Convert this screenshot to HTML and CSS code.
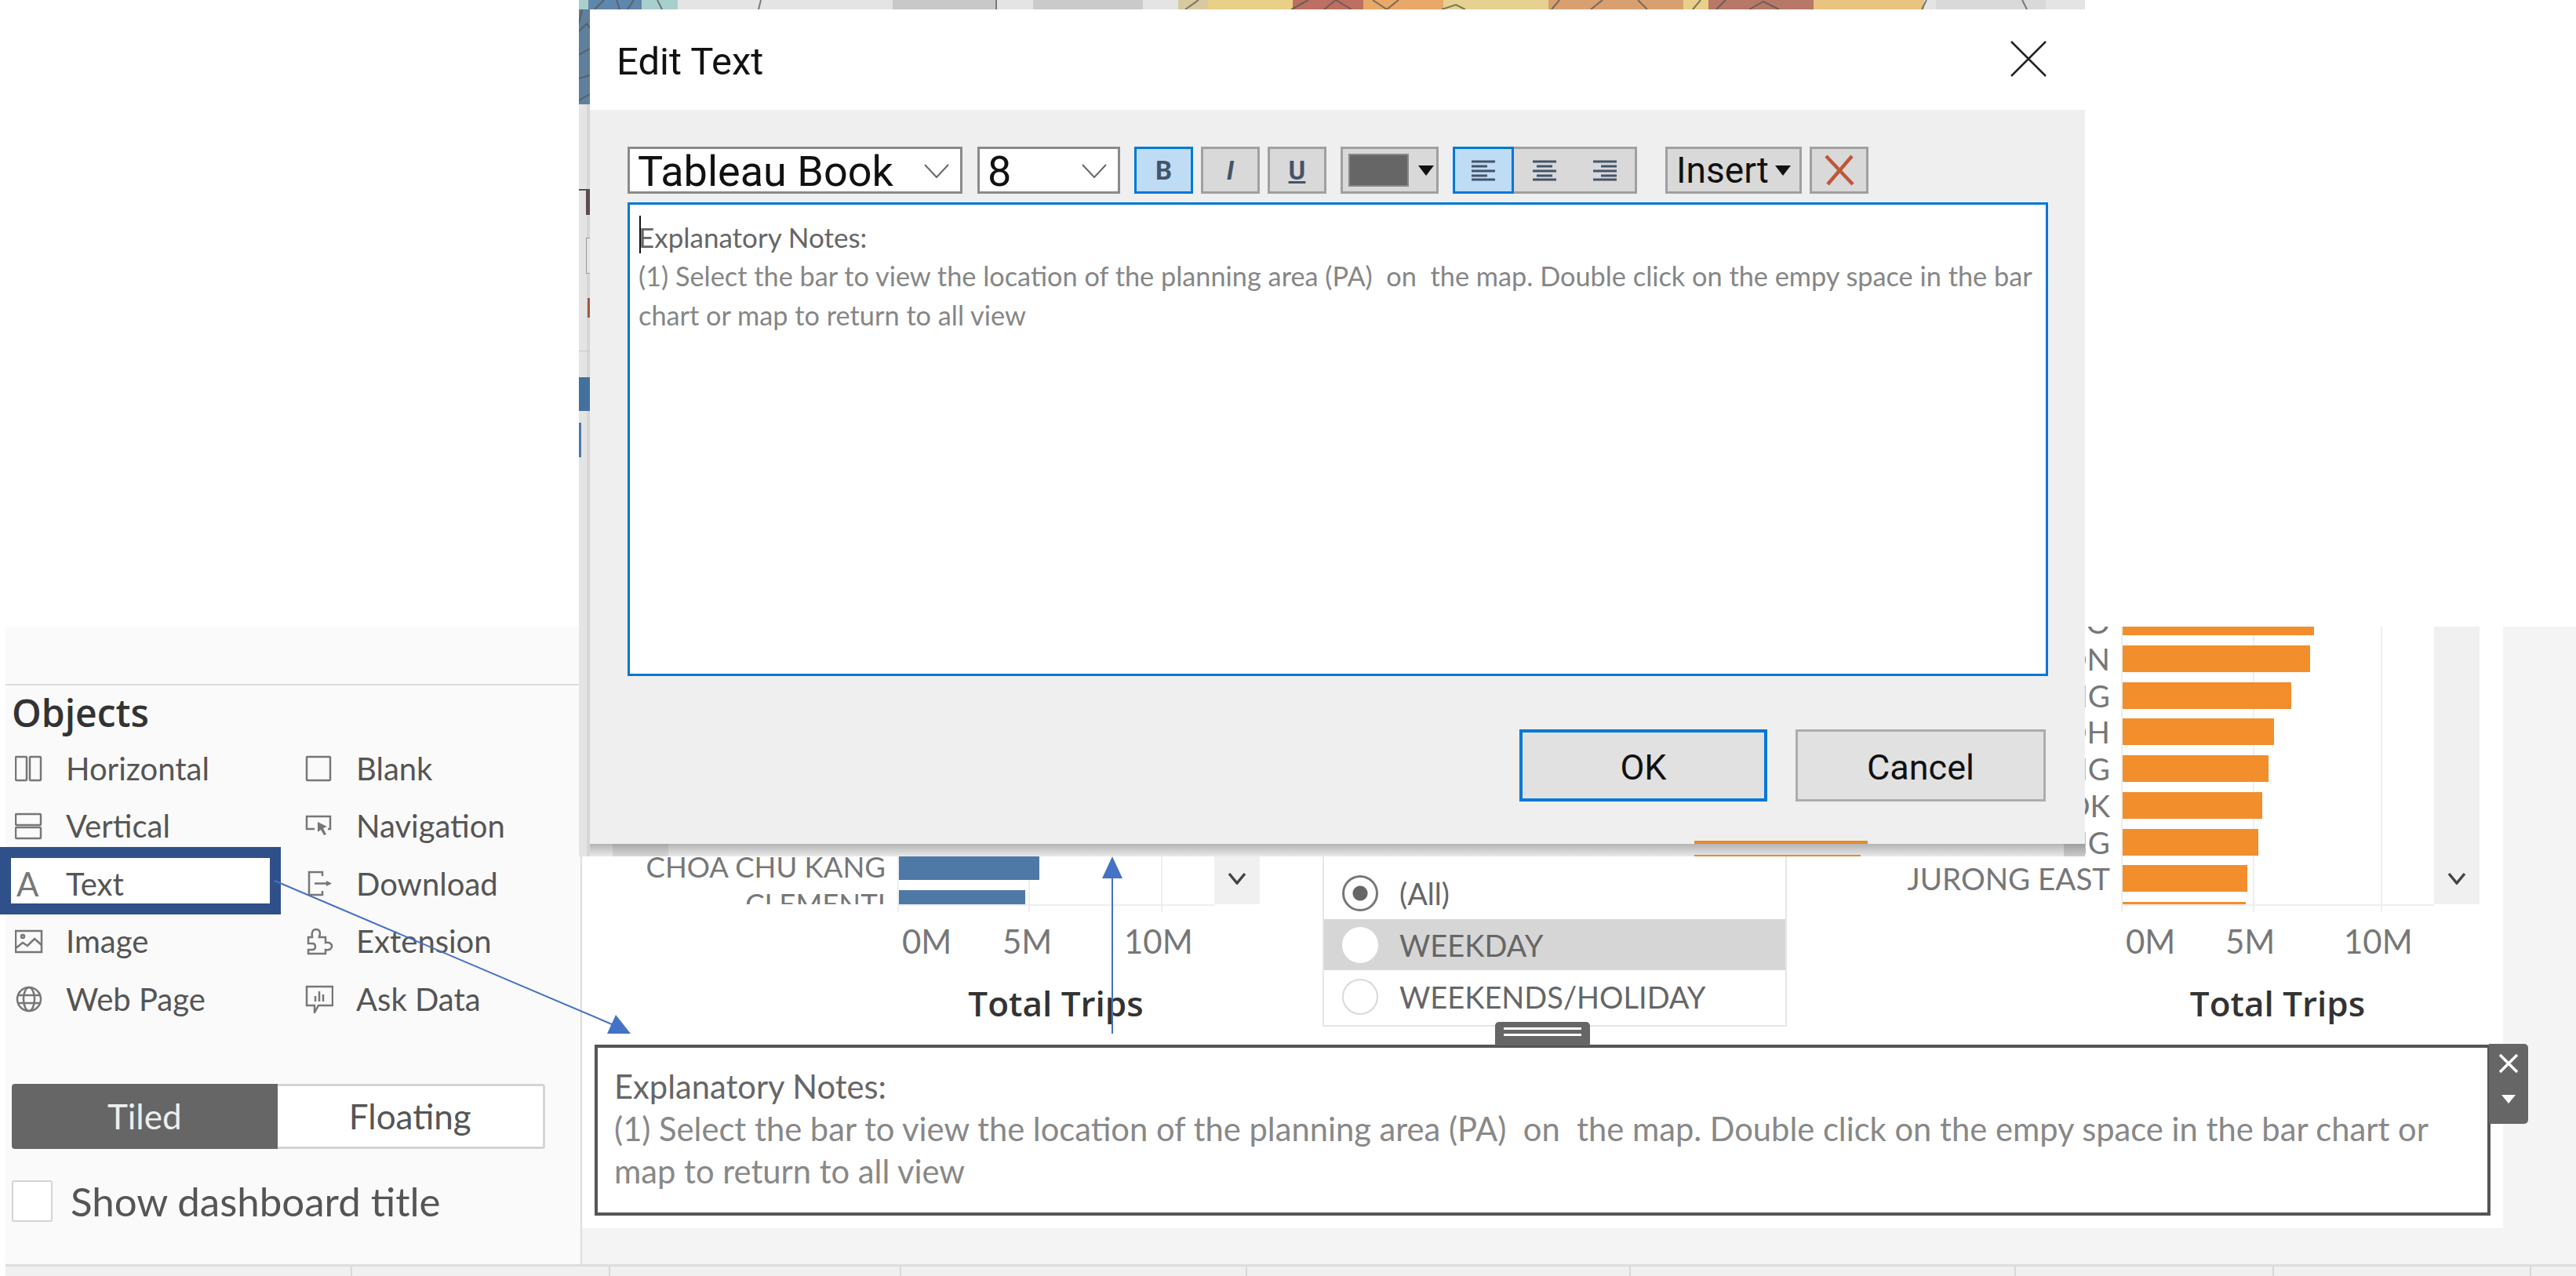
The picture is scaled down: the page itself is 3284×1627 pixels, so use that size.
FILE: index.html
```html
<!DOCTYPE html>
<html lang="en">
<head>
    <meta charset="UTF-8">
    <title>Edit Text</title>
    <link rel="stylesheet" href="styles.css">
</head>
<body>
<div class="page">
    <div class="dashboard">
        <div class="workarea">
            <aside class="objects-panel">
                <div class="highlight"></div>
                <div class="panel-top"></div>
                <h2 class="objects-title">Objects</h2>
                <div class="objects-list">
                    <div class="object-item">
                        <svg class="icon" viewBox="0 0 36 36"><rect x="1" y="3" width="14" height="30" rx="1"/><rect x="19" y="3" width="14" height="30" rx="1"/></svg>
                        <span>Horizontal</span>
                    </div>
                    <div class="object-item">
                        <svg class="icon" viewBox="0 0 36 36"><rect x="2" y="3" width="30" height="30" rx="1"/></svg>
                        <span>Blank</span>
                    </div>
                    <div class="object-item">
                        <svg class="icon" viewBox="0 0 36 36"><rect x="1" y="3" width="32" height="14" rx="1"/><rect x="1" y="20" width="32" height="14" rx="1"/></svg>
                        <span>Vertical</span>
                    </div>
                    <div class="object-item">
                        <svg class="icon" viewBox="0 0 36 36"><path d="M12 22H2V6H32V22H29"/><path class="fill" d="M16 13L28 19L23 21L27 29L24 30L20 23L16 26Z"/></svg>
                        <span>Navigation</span>
                    </div>
                    <div class="object-item">
                        <span class="icon-text">A</span>
                        <span>Text</span>
                    </div>
                    <div class="object-item">
                        <svg class="icon" viewBox="0 0 36 36"><path d="M22 8V3H5V32H22V27M12 17.5H28"/><path class="fill" d="M27 14L34 17.5L27 21Z"/></svg>
                        <span>Download</span>
                    </div>
                    <div class="object-item">
                        <svg class="icon" viewBox="0 0 36 36"><rect x="1" y="5" width="33" height="27"/><path d="M1 27L10 20L16 24L25 15L34 23"/><circle cx="10" cy="12" r="2"/></svg>
                        <span>Image</span>
                    </div>
                    <div class="object-item">
                        <svg class="icon" viewBox="0 0 36 36"><path d="M4 13H9C8 8 9 3 14 3C19 3 20 8 18 13H26V20C31 19 34 21 34 24.5C34 28 31 30 26 29V34H4V29H9C12 29 13 27 13 25C13 23 12 21 9 21H4Z"/></svg>
                        <span>Extension</span>
                    </div>
                    <div class="object-item">
                        <svg class="icon" viewBox="0 0 36 36"><circle cx="18" cy="18" r="15"/><ellipse cx="18" cy="18" rx="7" ry="15"/><path d="M3 13H33M3 23H33"/></svg>
                        <span>Web Page</span>
                    </div>
                    <div class="object-item">
                        <svg class="icon" viewBox="0 0 36 36"><path d="M2 2H35V26H17L12 35V26H2Z"/><path d="M13 14V21M18 8V21M23 12V21"/></svg>
                        <span>Ask Data</span>
                    </div>
                </div>
                <div class="layout-toggle">
                    <div class="toggle-btn active">Tiled</div>
                    <div class="toggle-btn">Floating</div>
                </div>
                <label class="title-check">
                    <span class="checkbox"></span>
                    <span>Show dashboard title</span>
                </label>
            </aside>

            <main class="main-area">
                <div class="canvas">
                    <div class="charts">
                        <section class="chart chart-left">
                            <div class="plot">
                                <div class="labels">
                                    <div class="label">CHOA CHU KANG</div>
                                    <div class="label">CLEMENTI</div>
                                </div>
                                <div class="bars">
                                    <div class="bar bar-blue" style="width:179px"></div>
                                    <div class="bar bar-blue" style="width:161px"></div>
                                </div>
                                <div class="scroller">
                                    <svg class="chevron" viewBox="0 0 24 16"><path d="M2 2L12 14L22 2"/></svg>
                                </div>
                            </div>
                            <div class="axis">
                                <div class="ticks"></div>
                                <div class="tick-labels">
                                    <span>0M</span><span>5M</span><span>10M</span>
                                </div>
                                <div class="axis-title">Total Trips</div>
                            </div>
                        </section>

                        <section class="filter">
                            <div class="filter-row">
                                <span class="radio checked"></span><span>(All)</span>
                            </div>
                            <div class="filter-row hovered">
                                <span class="radio"></span><span>WEEKDAY</span>
                            </div>
                            <div class="filter-row">
                                <span class="radio"></span><span>WEEKENDS/HOLIDAY</span>
                            </div>
                        </section>

                        <section class="chart chart-right">
                            <div class="plot">
                                <div class="labels">
                                    <div class="label">ANG MO KIO</div>
                                    <div class="label">SERANGOON</div>
                                    <div class="label">HOUGANG</div>
                                    <div class="label">TOA PAYOH</div>
                                    <div class="label">SENGKANG</div>
                                    <div class="label">BEDOK</div>
                                    <div class="label">BUKIT PANJANG</div>
                                    <div class="label">JURONG EAST</div>
                                    <div class="label">QUEENSTOWN</div>
                                </div>
                                <div class="bars">
                                    <div class="bar bar-orange" style="width:244px"></div>
                                    <div class="bar bar-orange" style="width:239px"></div>
                                    <div class="bar bar-orange" style="width:215px"></div>
                                    <div class="bar bar-orange" style="width:193px"></div>
                                    <div class="bar bar-orange" style="width:186px"></div>
                                    <div class="bar bar-orange" style="width:178px"></div>
                                    <div class="bar bar-orange" style="width:173px"></div>
                                    <div class="bar bar-orange" style="width:159px"></div>
                                    <div class="bar bar-orange" style="width:157px"></div>
                                </div>
                                <div class="scroller">
                                    <svg class="chevron" viewBox="0 0 24 16"><path d="M2 2L12 14L22 2"/></svg>
                                </div>
                            </div>
                            <div class="axis">
                                <div class="ticks"></div>
                                <div class="tick-labels">
                                    <span>0M</span><span>5M</span><span>10M</span>
                                </div>
                                <div class="axis-title">Total Trips</div>
                            </div>
                        </section>
                    </div>

                    <section class="notes">
                        <div class="notes-handle"><span></span><span></span></div>
                        <div class="notes-tools">
                            <svg class="notes-close" viewBox="0 0 26 26"><path d="M2 2L24 24M24 2L2 24"/></svg>
                            <span class="notes-menu"></span>
                        </div>
                        <p class="notes-heading">Explanatory Notes:</p>
                        <p class="notes-body">(1) Select the bar to view the location of the planning area (PA)&nbsp; on&nbsp; the map. Double click on the empy space in the bar chart or map to return to all view</p>
                    </section>
                </div>
            </main>
        </div>
        <div class="tabs">
            <span></span><span></span><span></span><span></span><span></span><span></span><span></span><span></span><span></span>
        </div>
    </div>

    <!-- pasted dialog capture, with a sliver of the map page behind it -->
    <div class="capture">
        <svg class="capture-bg" viewBox="0 0 1920 1092">
            <rect x="0" y="0" width="14" height="133" fill="#5f7f9c"/>
            <rect x="0" y="0" width="126" height="12" fill="#a9cfcc"/>
            <rect x="12" y="0" width="68" height="12" fill="#5f86ab"/>
            <rect x="126" y="0" width="1764" height="12" fill="#e4e4e4"/>
            <rect x="400" y="0" width="131" height="12" fill="#c8c8c8"/>
            <rect x="579" y="0" width="140" height="12" fill="#cacaca"/>
            <rect x="764" y="0" width="38" height="12" fill="#d8c9a0"/>
            <rect x="802" y="0" width="108" height="12" fill="#e8d088"/>
            <rect x="910" y="0" width="90" height="12" fill="#bd6f62"/>
            <rect x="1000" y="0" width="102" height="12" fill="#e8a868"/>
            <rect x="1102" y="0" width="134" height="12" fill="#e6d190"/>
            <rect x="1236" y="0" width="172" height="12" fill="#d8a070"/>
            <rect x="1408" y="0" width="32" height="12" fill="#e8d088"/>
            <rect x="1440" y="0" width="134" height="12" fill="#b87868"/>
            <rect x="1574" y="0" width="141" height="12" fill="#e8c480"/>
            <rect x="1730" y="0" width="140" height="12" fill="#d9d9d9"/>
            <g class="map-lines">
                <path d="M0 40L10 30L14 36M0 70L14 62M0 100L14 96M0 128L14 120M4 12L0 30"/>
                <path d="M20 12L32 0M48 0L52 12M62 12L70 0M100 0L106 12M232 0L229 12M532 12V0"/>
                <path d="M773 12L790 0M908 12L930 0M950 12L965 0L985 12M1012 0L1030 12L1045 0"/>
                <path d="M1100 12L1118 6L1130 12M1240 12L1250 0M1290 12L1305 0M1350 0L1362 12M1420 12L1430 0"/>
                <path d="M1450 12L1462 0M1492 12L1510 2L1530 12M1712 12L1718 0M1840 0L1846 12"/>
            </g>
            <rect x="0" y="133" width="14" height="959" fill="#e4e4e4"/>
            <rect x="10" y="133" width="4" height="959" fill="#d6d6d6"/>
            <rect x="0" y="241" width="14" height="2" fill="#555"/>
            <rect x="9" y="241" width="5" height="33" fill="#5b4c52"/>
            <rect x="9" y="303" width="5" height="46" fill="#999"/>
            <rect x="10" y="304" width="4" height="44" fill="#e4e4e4"/>
            <rect x="11" y="380" width="3" height="25" fill="#9b5a3e"/>
            <rect x="0" y="447" width="14" height="1" fill="#c8c8c8"/>
            <rect x="0" y="481" width="14" height="43" fill="#44709d"/>
            <rect x="0" y="539" width="3" height="44" fill="#4e79a7"/>
            <defs>
                <linearGradient id="shadow" x1="0" y1="0" x2="0" y2="1">
                    <stop offset="0" stop-color="#b4b4b4"/>
                    <stop offset="1" stop-color="#e9e9e9"/>
                </linearGradient>
            </defs>
            <rect x="14" y="1076" width="1906" height="16" fill="url(#shadow)"/>
            <rect x="43" y="1076" width="71" height="16" fill="#000" opacity="0.07"/>
            <rect x="1893" y="1076" width="27" height="16" fill="#000" opacity="0.12"/>
            <rect x="1422" y="1090" width="212" height="2" fill="#e88a2a"/>
        </svg>
        <div class="dialog">
            <header class="dialog-head">
                <h1 class="dialog-title">Edit Text</h1>
                <svg class="dialog-close" viewBox="0 0 46 46"><path d="M1 1L45 45M45 1L1 45"/></svg>
            </header>
            <div class="dialog-body">
                <div class="toolbar">
                    <div class="combo combo-font">
                        <span>Tableau Book</span>
                        <svg class="combo-arrow" viewBox="0 0 32 18"><path d="M1 1L16 17L31 1"/></svg>
                    </div>
                    <div class="combo combo-size">
                        <span>8</span>
                        <svg class="combo-arrow" viewBox="0 0 32 18"><path d="M1 1L16 17L31 1"/></svg>
                    </div>
                    <button class="tool active fmt-bold">B</button>
                    <button class="tool fmt-italic">I</button>
                    <button class="tool fmt-under">U</button>
                    <button class="tool color-tool">
                        <span class="swatch"></span>
                        <span class="caret"></span>
                    </button>
                    <div class="align-group">
                        <button class="align-btn active">
                            <svg viewBox="0 0 30 27"><path d="M0 2H30M0 8H20M0 14H30M0 20H20M0 25H30"/></svg>
                        </button>
                        <button class="align-btn">
                            <svg viewBox="0 0 30 27"><path d="M0 2H30M5 8H25M0 14H30M5 20H25M0 25H30"/></svg>
                        </button>
                        <button class="align-btn">
                            <svg viewBox="0 0 30 27"><path d="M0 2H30M10 8H30M0 14H30M10 20H30M0 25H30"/></svg>
                        </button>
                    </div>
                    <button class="tool insert-tool">Insert<span class="caret"></span></button>
                    <button class="tool clear-tool">
                        <svg viewBox="0 0 40 40"><path d="M3 2L37 38M36 2L5 38"/></svg>
                    </button>
                </div>
                <div class="editor">
                    <span class="text-caret"></span>
                    <p class="editor-heading">Explanatory Notes:</p>
                    <p class="editor-text">(1) Select the bar to view the location of the planning area (PA)&nbsp; on&nbsp; the map. Double click on the empy space in the bar chart or map to return to all view</p>
                </div>
                <div class="dialog-actions">
                    <button class="action primary">OK</button>
                    <button class="action">Cancel</button>
                </div>
            </div>
        </div>
        <span class="capture-orange"></span>
    </div>

    <!-- callout arrows drawn over the screenshots -->
    <svg class="callouts" viewBox="0 0 3284 1627">
        <path d="M350 1123L780 1306M1418 1318V1115"/>
        <polygon points="804,1318 774,1318 785,1294"/>
        <polygon points="1418,1092 1405,1120 1431,1120"/>
    </svg>
</div>
</body>
</html>
```

FILE: styles.css
```css
* {
    box-sizing: border-box;
}

body {
    margin: 0;
    background: #fff;
    font-family: "Lato", "Liberation Sans", sans-serif;
    color: #555;
}

p, h1, h2 {
    margin: 0;
}

button {
    padding: 0;
    font-family: inherit;
    cursor: default;
}

.page {
    position: relative;
    width: 3284px;
    height: 1627px;
    padding-top: 799px;
    overflow: hidden;
}

.dashboard {
    margin-left: 7px;
    height: 828px;
    display: flex;
    flex-direction: column;
}

.workarea {
    flex: 1;
    display: flex;
    background: #f4f4f4;
}

/* left panel */
.objects-panel {
    position: relative;
    width: 735px;
    background: #fafafa;
    border-right: 2px solid #ddd;
}

.highlight {
    position: absolute;
    left: -7px;
    top: 281px;
    width: 358px;
    height: 86px;
    border: 14px solid #2f5089;
    background: #fff;
}

.panel-top {
    height: 75px;
    border-bottom: 2px solid #ddd;
}

.objects-title {
    position: relative;
    margin: 5px 0 0 8px;
    height: 64px;
    font-family: "Open Sans", "Liberation Sans", sans-serif;
    font-size: 48px;
    line-height: 60px;
    font-weight: 600;
    color: #333;
}

.objects-list {
    position: relative;
    display: grid;
    grid-template-columns: 370px 1fr;
    grid-auto-rows: 73.5px;
    padding-left: 12px;
}

.object-item {
    display: grid;
    grid-template-columns: 36px 1fr;
    column-gap: 29px;
    align-items: center;
    font-size: 40px;
    color: #555;
}

.icon {
    width: 36px;
    height: 36px;
    fill: none;
    stroke: #777;
    stroke-width: 2.5;
}

.icon .fill {
    fill: #777;
    stroke: none;
}

.icon-text {
    padding-left: 2px;
    font-size: 42px;
    color: #777;
}

.layout-toggle {
    display: flex;
    width: 680px;
    height: 83px;
    margin: 71px 0 0 8px;
}

.toggle-btn {
    flex: 1;
    display: flex;
    align-items: center;
    justify-content: center;
    font-size: 44px;
    background: #fff;
    border: 3px solid #d4d4d4;
    border-left: 0;
    border-radius: 0 4px 4px 0;
}

.toggle-btn.active {
    background: #666;
    color: #eee;
    border: 0;
    border-radius: 4px 0 0 4px;
}

.title-check {
    display: flex;
    align-items: center;
    gap: 23px;
    margin: 36px 0 0 8px;
    font-size: 51px;
}

.checkbox {
    width: 52px;
    height: 53px;
    background: #fff;
    border: 2px solid #d4d4d4;
    border-radius: 3px;
}

/* dashboard canvas */
.main-area {
    width: 2449px;
}

.canvas {
    height: 767px;
    background: #fff;
}

.charts {
    display: flex;
    height: 533px;
}

.chart {
    display: flex;
    flex-direction: column;
}

.chart-left {
    width: 944px;
}

.chart-right {
    width: 913px;
}

.plot {
    display: flex;
    height: 356px;
    overflow: hidden;
}

.labels,
.bars {
    display: flex;
    flex-direction: column;
    gap: 12.75px;
}

.labels {
    height: 354px;
}

.label {
    height: 34px;
    line-height: 34px;
    text-align: right;
    font-size: 38.5px;
    color: #777;
    white-space: nowrap;
}

.bars {
    padding-left: 2px;
    border-bottom: 2px solid #eee;
    background-repeat: no-repeat;
    overflow: hidden;
}

.bar {
    flex: none;
    height: 34px;
}

.bar-blue {
    background: #4e79a7;
}

.bar-orange {
    background: #f28e2b;
}

.chart-left .labels {
    width: 387px;
    margin-right: 15px;
    padding-top: 289px;
    overflow: hidden;
}

.chart-left .label {
    font-size: 36.5px;
}

.chart-left .bars {
    width: 404px;
    padding-top: 289px;
    background-image: linear-gradient(#eee, #eee), linear-gradient(#eee, #eee), linear-gradient(#eee, #eee);
    background-size: 2px 100%;
    background-position: 0 0, 167px 0, 336px 0;
}

.chart-right .labels {
    width: 412px;
    margin-right: 14px;
    margin-top: -23px;
    height: 377px;
    overflow: hidden;
}

.chart-right .bars {
    width: 399px;
    margin-top: -23px;
    background-image: linear-gradient(#eee, #eee), linear-gradient(#eee, #eee), linear-gradient(#eee, #eee);
    background-size: 2px 100%;
    background-position: 0 0, 168px 0, 331px 0;
}

.scroller {
    width: 58px;
    height: 354px;
    display: flex;
    align-items: flex-end;
    justify-content: center;
    padding-bottom: 25px;
    background: #f0f0f0;
}

.chevron {
    width: 24px;
    height: 16px;
    fill: none;
    stroke: #444;
    stroke-width: 3.5;
}

.ticks {
    height: 8px;
    background-repeat: no-repeat;
    background-image: linear-gradient(#eee, #eee), linear-gradient(#eee, #eee), linear-gradient(#eee, #eee);
    background-size: 2px 100%;
}

.chart-left .ticks {
    background-position: 402px 0, 569px 0, 738px 0;
}

.chart-right .ticks {
    background-position: 426px 0, 594px 0, 757px 0;
}

.tick-labels {
    display: grid;
    margin-top: 12px;
    height: 50px;
    font-size: 42px;
    line-height: 50px;
    color: #777;
}

.chart-left .tick-labels {
    grid-template-columns: 128px 155px auto;
    padding-left: 408px;
}

.chart-right .tick-labels {
    grid-template-columns: 127px 151px auto;
    padding-left: 432px;
}

.axis-title {
    margin-top: 27px;
    font-family: "Open Sans", "Liberation Sans", sans-serif;
    font-size: 44px;
    line-height: 54px;
    font-weight: 600;
    color: #333;
    text-align: center;
}

.chart-left .axis-title {
    width: 404px;
    margin-left: 402px;
}

.chart-right .axis-title {
    width: 399px;
    margin-left: 426px;
}

/* day type filter */
.filter {
    width: 592px;
    height: 217px;
    margin-top: 293px;
    padding-top: 13px;
    border: 2px solid #e6e6e6;
    border-top: 0;
    font-size: 38px;
    color: #666;
}

.filter-row {
    display: flex;
    align-items: center;
    gap: 27px;
    padding-left: 23px;
    height: 67px;
}

.filter-row.hovered {
    height: 65px;
    background: #d6d6d6;
}

.radio {
    flex: none;
    width: 46px;
    height: 46px;
    border: 2px solid #d8d8d8;
    border-radius: 50%;
    background: #fff;
}

.hovered .radio {
    border-color: #fff;
}

.radio.checked {
    border: 3px solid #777;
    background: radial-gradient(circle, #666 9px, #fff 10px);
}

/* notes box */
.notes {
    position: relative;
    width: 2417px;
    height: 218px;
    margin-left: 16px;
    padding: 22px 21px;
    border: 4px solid #555;
    font-size: 41.7px;
    line-height: 54px;
    color: #888;
}

.notes-heading {
    color: #666;
}

.notes-handle {
    position: absolute;
    left: 1144px;
    top: -33px;
    width: 121px;
    height: 30px;
    padding: 7px 11px 0;
    background: #666;
    border-radius: 5px 5px 0 0;
}

.notes-handle span {
    display: block;
    height: 3px;
    margin-bottom: 5px;
    background: #fff;
}

.notes-tools {
    position: absolute;
    right: -52px;
    top: -5px;
    width: 50px;
    height: 102px;
    display: flex;
    flex-direction: column;
    align-items: center;
    padding-top: 12px;
    background: #666;
    border-radius: 0 5px 5px 0;
}

.notes-close {
    width: 26px;
    height: 26px;
    fill: none;
    stroke: #fff;
    stroke-width: 3.5;
}

.notes-menu {
    margin-top: 27px;
    border-left: 9px solid transparent;
    border-right: 9px solid transparent;
    border-top: 11px solid #fff;
}

.tabs {
    height: 15px;
    display: grid;
    grid-template-columns: 442px 329px 371px 441px 489px 491px 329px 328px 1fr;
    background: #f0f0f0;
    border-top: 3px solid #ddd;
}

.tabs span {
    border-right: 2px solid #d8d8d8;
}

.tabs span:last-child {
    border-right: 0;
}

/* pasted dialog */
.capture {
    position: absolute;
    left: 738px;
    top: 0;
    width: 1920px;
    height: 1092px;
    padding: 12px 0 0 14px;
    background: #e4e4e4;
}

.capture-bg {
    position: absolute;
    left: 0;
    top: 0;
    width: 1920px;
    height: 1092px;
}

.map-lines path {
    fill: none;
    stroke: #555;
    stroke-width: 2;
    opacity: 0.75;
}

.capture-orange {
    position: absolute;
    left: 1422px;
    top: 1072px;
    width: 221px;
    height: 4px;
    background: #e88a2a;
}

.dialog {
    position: relative;
    height: 1064px;
    display: flex;
    flex-direction: column;
    background: #efefef;
    font-family: "Roboto", "Liberation Sans", sans-serif;
    color: #111;
}

.dialog-head {
    flex: none;
    height: 128px;
    display: flex;
    align-items: center;
    justify-content: space-between;
    padding: 0 49px 0 34px;
    background: #fff;
}

.dialog-title {
    font-size: 49px;
    font-weight: 400;
    padding-top: 4px;
}

.dialog-close {
    width: 46px;
    height: 46px;
    margin-bottom: 3px;
    fill: none;
    stroke: #222;
    stroke-width: 2.5;
}

.dialog-body {
    padding: 47px 47px 0 48px;
}

.toolbar {
    display: flex;
    height: 60px;
}

.combo {
    display: flex;
    align-items: center;
    justify-content: space-between;
    padding: 2px 12px 0 10px;
    background: #fff;
    border: 3px solid #8a8a8a;
    font-size: 54px;
}

.combo-font {
    width: 427px;
    margin-right: 19px;
}

.combo-size {
    width: 182px;
    margin-right: 18px;
}

.combo-arrow {
    width: 32px;
    height: 18px;
    margin-right: 2px;
    fill: none;
    stroke: #666;
    stroke-width: 2;
}

.tool {
    width: 75px;
    height: 60px;
    margin-right: 10px;
    display: flex;
    align-items: center;
    justify-content: center;
    background: #d9d9d9;
    border: 3px solid #a0a0a0;
    color: #44546a;
    font-size: 33px;
    font-weight: 700;
}

.tool.active {
    background: #bfdcf5;
    border-color: #0078d7;
}

.fmt-italic {
    font-style: italic;
}

.fmt-under {
    margin-right: 18px;
    text-decoration: underline;
}

.color-tool {
    width: 125px;
    margin-right: 18px;
    justify-content: flex-start;
    padding-left: 7px;
    gap: 12px;
}

.swatch {
    width: 77px;
    height: 42px;
    background: #666;
    border: 2px solid #888;
}

.caret {
    border-left: 10px solid transparent;
    border-right: 10px solid transparent;
    border-top: 13px solid #111;
}

.align-group {
    display: flex;
    width: 235px;
    height: 60px;
    margin-right: 36px;
    background: #d9d9d9;
    border: 3px solid #a0a0a0;
    border-left: 0;
}

.align-btn {
    flex: 1;
    margin: -3px 0;
    height: 60px;
    display: flex;
    align-items: center;
    justify-content: center;
    background: none;
    border: 0;
}

.align-btn.active {
    flex: none;
    width: 78px;
    background: #bfdcf5;
    border: 3px solid #0078d7;
}

.align-btn svg {
    width: 30px;
    height: 27px;
    fill: none;
    stroke: #44546a;
    stroke-width: 3;
}

.insert-tool {
    width: 174px;
    gap: 8px;
    font-size: 46px;
    font-weight: 400;
    color: #111;
}

.clear-tool {
    margin-right: 0;
}

.clear-tool svg {
    width: 40px;
    height: 40px;
    fill: none;
    stroke: #c0573a;
    stroke-width: 4.5;
}

.editor {
    position: relative;
    height: 604px;
    margin-top: 11px;
    padding: 16px 11px;
    background: #fff;
    border: 3px solid #0078d7;
    font-family: "Lato", "Liberation Sans", sans-serif;
    font-size: 34.3px;
    line-height: 50px;
    color: #868686;
}

.editor-heading {
    color: #666;
    font-size: 35px;
}

.text-caret {
    position: absolute;
    left: 12px;
    top: 14px;
    width: 2px;
    height: 48px;
    background: #111;
}

.dialog-actions {
    display: flex;
    justify-content: flex-end;
    gap: 36px;
    margin-top: 68px;
    padding-right: 3px;
}

.action {
    width: 319px;
    height: 92px;
    padding-top: 4px;
    background: #e1e1e1;
    border: 3px solid #adadad;
    font-size: 45px;
    color: #111;
}

.action.primary {
    width: 316px;
    border: 4px solid #0078d7;
}

.callouts {
    position: absolute;
    left: 0;
    top: 0;
    width: 3284px;
    height: 1627px;
    pointer-events: none;
}

.callouts path {
    fill: none;
    stroke: #4472c4;
    stroke-width: 2;
}

.callouts polygon {
    fill: #4472c4;
}
```
